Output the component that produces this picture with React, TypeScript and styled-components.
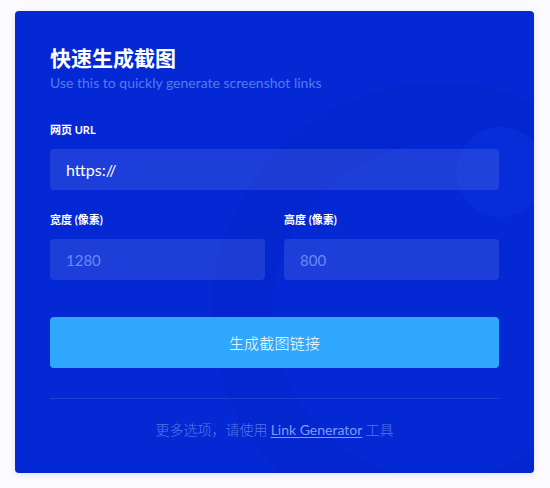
import React from "react";
import styled, { createGlobalStyle } from "styled-components";

const GlobalStyle = createGlobalStyle`
  html, body {
    margin: 0;
    padding: 0;
    background: #fbfbfd;
  }
  body {
    font-family: "Lato", "Noto Sans CJK SC", sans-serif;
  }
`;

const Page = styled.div`
  width: 550px;
  height: 488px;
  box-sizing: border-box;
  padding: 11px 16px 15px 15px;
`;

const Card = styled.section`
  position: relative;
  overflow: hidden;
  height: 462px;
  box-sizing: border-box;
  padding: 31px 35px 0 35px;
  background: #0429d4;
  border-radius: 4px;
  box-shadow: 0 1px 6px rgba(10, 30, 120, 0.12);
  display: flex;
  flex-direction: column;
`;

const Backdrop = styled.svg`
  position: absolute;
  left: 0;
  top: 0;
  width: 519px;
  height: 462px;
  pointer-events: none;
`;

const Content = styled.div`
  position: relative;
  display: flex;
  flex-direction: column;
`;

const Title = styled.h1`
  margin: 0;
  font-family: "Noto Sans CJK SC", sans-serif;
  font-size: 21px;
  line-height: 30px;
  font-weight: 700;
  color: #ffffff;
`;

const Subtitle = styled.p`
  margin: 2px 0 0 0;
  font-size: 14px;
  line-height: 18px;
  color: #5679ee;
`;

const Field = styled.div<{ $top: number }>`
  display: flex;
  flex-direction: column;
  gap: 11px;
  margin-top: ${(p) => p.$top}px;
`;

const Row = styled.div`
  display: grid;
  grid-template-columns: 1fr 1fr;
  column-gap: 19px;
`;

const Label = styled.label`
  font-family: "Lato", "Noto Sans CJK SC", sans-serif;
  font-size: 11px;
  line-height: 16px;
  font-weight: 700;
  color: #ffffff;
`;

const Input = styled.div<{ $muted?: boolean }>`
  height: 41px;
  box-sizing: border-box;
  padding: 0 16px;
  display: flex;
  align-items: center;
  border-radius: 4px;
  background: rgba(255, 255, 255, 0.1);
  font-size: ${(p) => (p.$muted ? 15 : 16)}px;
  color: ${(p) => (p.$muted ? "#6a88f4" : "#ffffff")};
`;

const Button = styled.button`
  margin-top: 37px;
  height: 51px;
  border: none;
  border-radius: 4px;
  background: #2ea7fd;
  color: #ffffff;
  font-family: "Noto Sans CJK SC", sans-serif;
  font-size: 15px;
  font-weight: 300;
  letter-spacing: 0.2px;
`;

const Divider = styled.hr`
  margin: 30px 0 0 0;
  border: none;
  height: 1px;
  background: rgba(255, 255, 255, 0.1);
`;

const Footer = styled.p`
  margin: 21px 0 0 0;
  text-align: center;
  font-family: "Noto Sans CJK SC", sans-serif;
  font-size: 14px;
  line-height: 18px;
  font-weight: 300;
  color: #5476e8;
`;

const FooterLink = styled.a`
  font-family: "Lato", "Noto Sans CJK SC", sans-serif;
  font-weight: 400;
  color: #7f9bf5;
  text-decoration: underline;
  text-underline-offset: 2px;
`;

export default function App() {
  return (
    <>
      <GlobalStyle />
      <Page>
        <Card>
          <Backdrop viewBox="0 0 519 462">
            <circle cx="425" cy="300" r="228" fill="#0323c9" opacity="0.5" />
            <circle cx="425" cy="300" r="168" fill="#0429d4" />
            <circle cx="486" cy="161" r="45" fill="#072dd8" />
          </Backdrop>
          <Content>
            <Title>快速生成截图</Title>
            <Subtitle>Use this to quickly generate screenshot links</Subtitle>
            <Field $top={30}>
              <Label>网页 URL</Label>
              <Input>https://</Input>
            </Field>
            <Row>
              <Field $top={22}>
                <Label>宽度 (像素)</Label>
                <Input $muted>1280</Input>
              </Field>
              <Field $top={22}>
                <Label>高度 (像素)</Label>
                <Input $muted>800</Input>
              </Field>
            </Row>
            <Button>生成截图链接</Button>
            <Divider />
            <Footer>
              更多选项，请使用 <FooterLink>Link Generator</FooterLink> 工具
            </Footer>
          </Content>
        </Card>
      </Page>
    </>
  );
}
